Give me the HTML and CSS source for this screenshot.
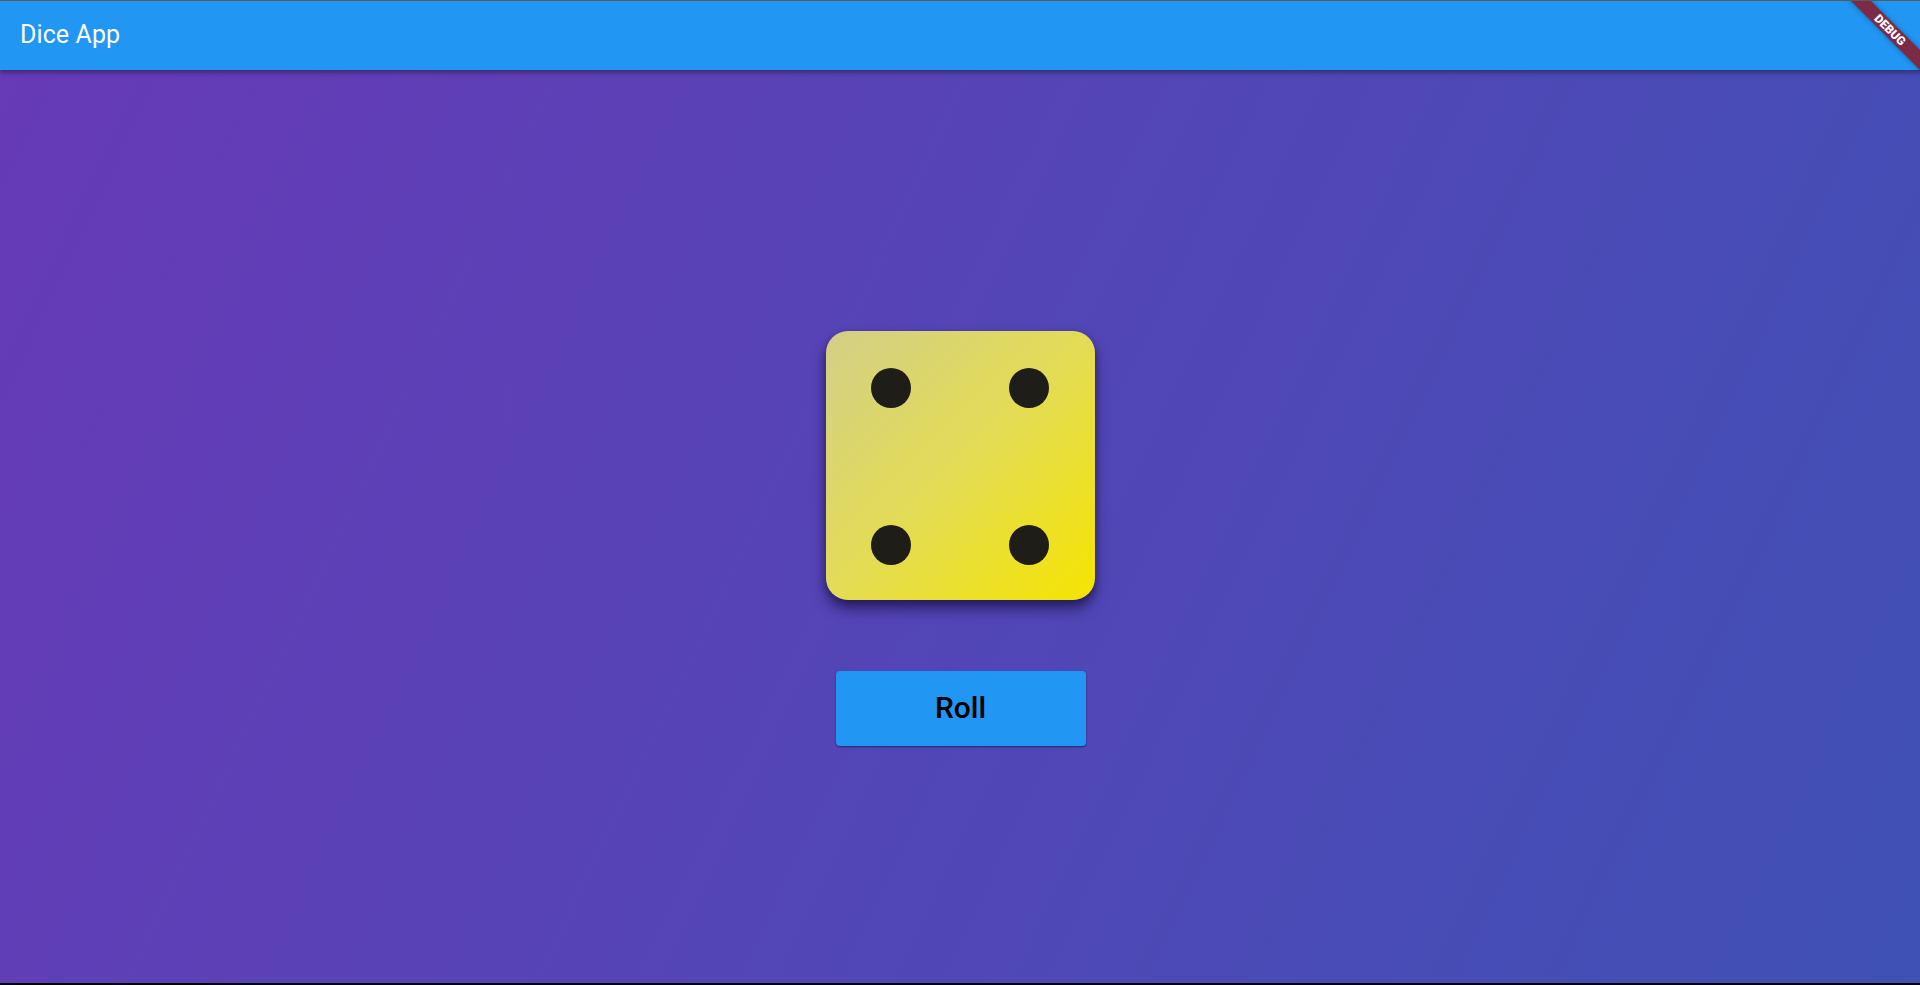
FILE: index.html
```html
<!DOCTYPE html>
<html lang="en">
<head>
<meta charset="utf-8">
<title>Dice App</title>
<link rel="stylesheet" href="styles.css">
</head>
<body>
<div class="page">
  <div class="topline"></div>
  <header class="appbar">
    <h1 class="title">Dice App</h1>
  </header>
  <main class="stage">
    <div class="content">
      <div class="dice">
        <div class="pips-row">
          <span class="pip"></span>
          <span class="pip"></span>
        </div>
        <div class="pips-row">
          <span class="pip"></span>
          <span class="pip"></span>
        </div>
      </div>
      <button class="roll" type="button">Roll</button>
    </div>
  </main>
  <div class="bottomline"></div>
  <div class="banner-clip">
    <div class="banner">DEBUG</div>
  </div>
</div>
</body>
</html>
```

FILE: styles.css
```css
* { box-sizing: border-box; }
html, body { margin: 0; padding: 0; }
body {
  font-family: Roboto, "Noto Sans", "Liberation Sans", sans-serif;
  width: 1920px;
  height: 985px;
  overflow: hidden;
}
.page {
  position: relative;
  width: 1920px;
  height: 985px;
  display: flex;
  flex-direction: column;
}
.topline {
  height: 1px;
  background: #5a5f66;
  flex: none;
}
.appbar {
  flex: none;
  height: 69px;
  background: #2196F3;
  display: flex;
  align-items: center;
  padding-left: 20px;
  box-shadow: 0 2px 4px rgba(0,0,0,0.25), 0 4px 5px rgba(0,0,0,0.12);
  position: relative;
  z-index: 2;
}
.title {
  margin: 0;
  color: #fff;
  font-size: 25px;
  font-weight: 400;
  letter-spacing: 0.1px;
  padding-bottom: 2px;
}
.stage {
  flex: 1;
  background: linear-gradient(115.4deg, #673AB7 0%, #3F51B5 100%);
  display: flex;
  align-items: center;
  justify-content: center;
  padding-top: 23px;
}
.content {
  display: flex;
  flex-direction: column;
  align-items: center;
  gap: 71px;
}
.dice {
  width: 269px;
  height: 269px;
  border-radius: 22px;
  background: linear-gradient(135deg, #d3cf87 0%, #e3dc55 50%, #f5e400 100%);
  box-shadow: 0 9px 14px rgba(20, 10, 60, 0.6), 0 3px 6px rgba(0,0,0,0.25);
  display: flex;
  flex-direction: column;
  justify-content: space-between;
  padding: 37px 46px 35px 45px;
}
.pips-row {
  display: flex;
  justify-content: space-between;
}
.pip {
  width: 40px;
  height: 40px;
  border-radius: 50%;
  background: #1e1d18;
}
.roll {
  width: 250px;
  height: 75px;
  margin-left: 1px;
  border: none;
  border-radius: 4px;
  background: #2196F3;
  color: #000;
  font-family: Roboto, "Noto Sans", "Liberation Sans", sans-serif;
  font-size: 30px;
  font-weight: 500;
  box-shadow: 0 1px 2px rgba(10, 10, 40, 0.55);
  padding: 0 0 2px 0;
  cursor: pointer;
}
.bottomline {
  flex: none;
  height: 2px;
  background: #000;
}
.banner-clip {
  position: absolute;
  top: 1px;
  right: 0;
  width: 100px;
  height: 100px;
  overflow: hidden;
  z-index: 5;
  pointer-events: none;
}
.banner {
  position: absolute;
  width: 130px;
  height: 14px;
  line-height: 14px;
  left: 5px;
  top: 22px;
  transform: rotate(45deg);
  background: #7c2a45;
  color: #fff;
  font-family: Roboto, "Noto Sans", "Liberation Sans", sans-serif;
  font-size: 12px;
  font-weight: 900;
  text-align: center;
  letter-spacing: 0;
  box-shadow: 0 0 5px rgba(0,0,0,0.35);
}
```
